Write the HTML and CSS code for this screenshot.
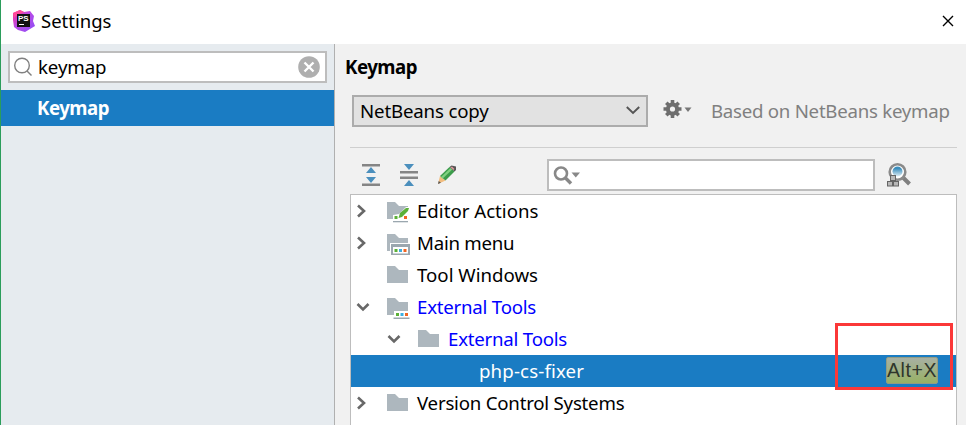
FILE: index.html
```
<!DOCTYPE html>
<html lang="en">
<head>
<meta charset="utf-8">
<title>Settings</title>
<link rel="stylesheet" href="styles.css">
</head>
<body>
<svg class="defs" width="0" height="0">
  <symbol id="folder" viewBox="0 0 24 24"><path fill="#adb7be" d="M1 3h8l4 4h9v13H1z"/></symbol>
  <symbol id="right" viewBox="0 0 12 16"><path fill="none" stroke="#686868" stroke-width="2.6" d="M2 2.500l6 5.500-6 5.500"/></symbol>
  <symbol id="down" viewBox="0 0 14 12"><path fill="none" stroke="#686868" stroke-width="2.6" d="M1.500 3l5.500 5.500L12.500 3"/></symbol>
</svg>
<div class="window">
  <header class="titlebar">
    <svg class="logo" width="24" height="24" viewBox="0 0 24 24">
      <defs><linearGradient id="lg" x1="0" y1="0" x2="1" y2="1"><stop offset="0" stop-color="#ff318c"/><stop offset=".45" stop-color="#b94be8"/><stop offset="1" stop-color="#8b4df5"/></linearGradient></defs>
      <path fill="url(#lg)" d="M1 4l7-3 4 2 6-1 4 5-1 5 2 5-5 3-5 3-7-2-4-3-1-7z"/>
      <path fill="#ff4a9a" d="M1 4l7-3 4 2-8 4-2 2z"/>
      <rect x="5" y="5" width="13" height="13" fill="#111"/>
      <text x="6" y="12" class="logo-text">PS</text>
      <path stroke="#fff" stroke-width="1" d="M7 15.500h5"/>
    </svg>
    <span class="title">Settings</span>
    <svg class="close" width="12" height="12" viewBox="0 0 12 12"><path stroke="#000" stroke-width="1.4" d="M1 1l10 10M11 1L1 11"/></svg>
  </header>
  <div class="content">
    <aside class="sidebar">
      <div class="search">
        <svg width="20" height="20" viewBox="0 0 20 20"><g fill="none" stroke="#808080" stroke-width="1.400"><circle cx="9" cy="8.500" r="7.300"/><path d="M14 14l4.500 4.500"/></g></svg>
        <span class="query">keymap</span>
        <svg class="clear" width="22" height="22" viewBox="0 0 22 22"><circle cx="11" cy="11" r="10.800" fill="#afafaf"/><path stroke="#fff" stroke-width="2.400" d="M6.500 6.500l9 9M15.500 6.500l-9 9"/></svg>
      </div>
      <div class="nav-item">Keymap</div>
    </aside>
    <main class="main">
      <h1 class="heading">Keymap</h1>
      <div class="scheme">
        <div class="combo"><span class="combo-label">NetBeans copy</span>
          <svg width="14" height="10" viewBox="0 0 14 10"><path fill="none" stroke="#555" stroke-width="1.900" d="M.8 1l6.200 6 6.200-6"/></svg>
        </div>
        <svg class="gear" width="30" height="20" viewBox="0 0 30 20">
          <g stroke="#6e6e6e" stroke-width="3.600"><path d="M9.500 0v18M.5 9h18M3.300 2.800l12.400 12.400M15.700 2.800L3.300 15.200"/></g>
          <circle cx="9.500" cy="9" r="6.600" fill="#6e6e6e"/><circle cx="9.500" cy="9" r="2.600" fill="#f1f1f1"/>
          <path fill="#777" d="M21.500 7.500h7l-3.500 4.500z"/>
        </svg>
        <span class="based">Based on NetBeans keymap</span>
      </div>
      <div class="toolbar">
        <svg class="tool" width="20" height="24" viewBox="0 0 20 24"><path fill="#858585" d="M1 1h18v2.500H1zM1 20.500h18V23H1z"/><path fill="#4b8fbd" d="M5 10h10L10 4zM5 14h10l-5 6z"/></svg>
        <svg class="tool" width="20" height="24" viewBox="0 0 20 24"><path fill="#858585" d="M1 8h18v2.500H1zM1 13.500h18V16H1z"/><path fill="#4b8fbd" d="M5 1h10l-5 6zM5 23h10l-5-6z"/></svg>
        <svg class="tool" width="20" height="24" viewBox="0 0 20 24"><path fill="#f2bd80" d="M1 21l2-8 5.500 4.500z"/><path fill="#3c9c4b" d="M3 13L12.500 4l5 4.500-9 9z"/><path fill="#7fd07f" d="M4 14l9.500-9 1.800 1.500-9.600 9z"/><path fill="#555" d="M12.500 4L14.500 2.500 19 3.500V7l-1.500 1.500zM1 21l.7-3L4 19.700z"/><path fill="#d99" d="M13.500 4.500l1.500-1 2.500 2.500-1 1z"/></svg>
        <div class="filter"><svg width="28" height="20" viewBox="0 0 28 20"><g fill="none" stroke="#888"><circle cx="8" cy="7.500" r="6" stroke-width="2.600"/><path stroke-width="3.400" d="M12 11.500l6 6"/></g><path fill="#888" d="M18.500 6.500H27l-4.200 5z"/></svg></div>
        <svg class="find" width="26" height="26" viewBox="0 0 26 26">
          <defs><linearGradient id="lens" x1="0" y1="0" x2="0" y2="1"><stop offset=".2" stop-color="#3b8ebd"/><stop offset="1" stop-color="#e1f0f7"/></linearGradient></defs>
          <path stroke="#808080" stroke-width="4" d="M16.500 15l7 7"/><circle cx="11.500" cy="10" r="7.800" fill="#fff" stroke="#8a8a8a" stroke-width="2.600"/><circle cx="11.500" cy="9.500" r="5" fill="url(#lens)"/>
          <g fill="#b8b8b8" stroke="#656565"><rect x="4.500" y="13.500" width="5" height="5"/><rect x="1.500" y="19.500" width="5" height="4.500"/><rect x="7.500" y="19.500" width="5" height="4.500"/></g>
        </svg>
      </div>
      <div class="tree">
        <div class="row"><svg class="arrow" width="12" height="16"><use href="#right"/></svg>
          <svg class="folder" width="24" height="24" viewBox="0 0 24 24"><use href="#folder"/><path fill="#fff" d="M7 16l6-1 7-7h4v15H7z"/><path fill="#5cb038" d="M12.500 19l1.500-5 6-5h3l-1 3-6 6z"/><path fill="#5cb038" d="M8.500 17h3v3h-3z"/><path fill="#f26522" d="M18 17h3v3h-3z"/><path fill="#9ba7af" d="M7 22h15v1.300H7z"/></svg>
          <span class="label">Editor Actions</span></div>
        <div class="row"><svg class="arrow" width="12" height="16"><use href="#right"/></svg>
          <svg class="folder" width="24" height="24" viewBox="0 0 24 24"><use href="#folder"/><path fill="#fff" d="M4 12h20v12H4z"/><path fill="#9ba7af" d="M5 13h19v11H5z"/><path fill="#fff" d="M7 16h15v6.500H7z"/><path fill="#5cb038" d="M8.500 18h3v3h-3z"/><path fill="#3daee0" d="M13 18h3v3h-3z"/><path fill="#f26522" d="M17.500 18h3v3h-3z"/></svg>
          <span class="label menu">Main menu</span></div>
        <div class="row"><span class="arrow"></span><svg class="folder" width="24" height="24"><use href="#folder"/></svg><span class="label">Tool Windows</span></div>
        <div class="row"><svg class="arrow open" width="14" height="12"><use href="#down"/></svg>
          <svg class="folder" width="24" height="24" viewBox="0 0 24 24"><use href="#folder"/><path fill="#fff" d="M8 16h16v6H8z"/><path fill="#5cb038" d="M10 18h3v3h-3z"/><path fill="#3daee0" d="M14.500 18h3v3h-3z"/><path fill="#f26522" d="M19 18h3v3h-3z"/><path fill="#9ba7af" d="M7.500 22.500h16V24h-16z"/></svg>
          <span class="label link">External Tools</span></div>
        <div class="row nested"><svg class="arrow open" width="14" height="12"><use href="#down"/></svg><svg class="folder" width="24" height="24"><use href="#folder"/></svg><span class="label link">External Tools</span></div>
        <div class="row selected"><span class="label fixer">php-cs-fixer</span><span class="shortcut">Alt+X</span></div>
        <div class="row"><svg class="arrow" width="12" height="16"><use href="#right"/></svg><svg class="folder" width="24" height="24"><use href="#folder"/></svg><span class="label vcs">Version Control Systems</span></div>
        <div class="callout"></div>
      </div>
    </main>
  </div>
</div>
</body>
</html>
```
FILE: styles.css
```
* { box-sizing: border-box; }
body { margin: 0; font: 18.67px/32px "Noto Sans", "Open Sans", sans-serif; color: #000; }
svg { display: block; flex: none; }
.defs { position: absolute; }
.window { width: 966px; height: 425px; overflow: hidden; border-left: 1px solid #2b9d5b; display: flex; flex-direction: column; background: #fff; }
.titlebar { height: 44px; flex: none; display: flex; align-items: center; padding: 0 12px 2px 11px; white-space: nowrap; }
.logo-text { font: bold 8px "Liberation Sans", sans-serif; fill: #fff; }
.title { margin-left: 5px; font-size: 18.5px; }
.close { margin-left: auto; }
.content { flex: 1; display: flex; min-height: 0; }
.sidebar { width: 334px; flex: none; background: #e6ebef; border-right: 1px solid #b0b0b0; padding-top: 7px; }
.search { height: 32px; margin: 0 7px 7px; border: 2px solid #bdbdbd; background: #fff; display: flex; align-items: center; padding: 0 5px 0 3px; }
.query { margin-left: 5px; line-height: 26px; letter-spacing: -0.1px; }
.clear { margin-left: auto; }
.nav-item { height: 36px; background: #1a7cc3; color: #fff; font-weight: bold; line-height: 35px; padding-left: 36px; letter-spacing: -0.5px; }
.main { flex: 1; min-width: 0; background: #f1f1f1; padding: 7px 9px 0 15px; }
.heading { margin: 0 0 12px -5px; font-size: 18.67px; line-height: 32px; height: 32px; letter-spacing: -0.5px; }
.scheme { height: 53px; display: flex; border-bottom: 1px solid #cfcfcf; padding-left: 2px; white-space: nowrap; }
.combo { width: 296px; height: 32px; border: 2px solid #acacac; background: #e2e2e2; display: flex; justify-content: space-between; align-items: center; padding: 0 6px; line-height: 26px; }
.combo-label { letter-spacing: -0.16px; }
.gear { margin: 5px 0 0 15px; }
.based { margin-left: 18px; color: #808080; letter-spacing: -0.26px; }
.toolbar { height: 46px; display: flex; padding: 11px 0 0 11px; }
.tool { margin: 4px 18px 0 0; }
.filter { width: 328px; height: 32px; margin-left: 72px; border: 2px solid #bdbdbd; background: #fff; padding: 5px 4px; }
.find { margin: 3px 0 0 11px; }
.tree { position: relative; height: 240px; border: 1px solid #bdbdbd; background: #fff; }
.row { height: 32px; display: flex; align-items: center; padding-left: 5px; white-space: nowrap; }
.arrow { margin-right: 18px; width: 12px; }
.open { width: 14px; margin-right: 16px; }
.nested { padding-left: 36px; }
.folder { margin-right: 7px; }
.menu { letter-spacing: -0.25px; }
.link { color: #00f; letter-spacing: -0.23px; }
.vcs { letter-spacing: -0.22px; }
.fixer { letter-spacing: 0.15px; }
.selected { background: #1a7cc3; color: #fff; padding: 0 18px 0 128px; }
.shortcut { margin-left: auto; width: 52px; height: 27px; border: 1px solid #929c83; border-radius: 2px; background: linear-gradient(#a8b0a3, #98b164); color: #2f352b; font: 19.5px/24px "Liberation Sans", sans-serif; letter-spacing: 0.6px; text-align: center; margin-top: -1px; }
.callout { position: absolute; left: 484px; top: 128px; width: 118px; height: 67px; border: 3px solid #fb3838; }
```
